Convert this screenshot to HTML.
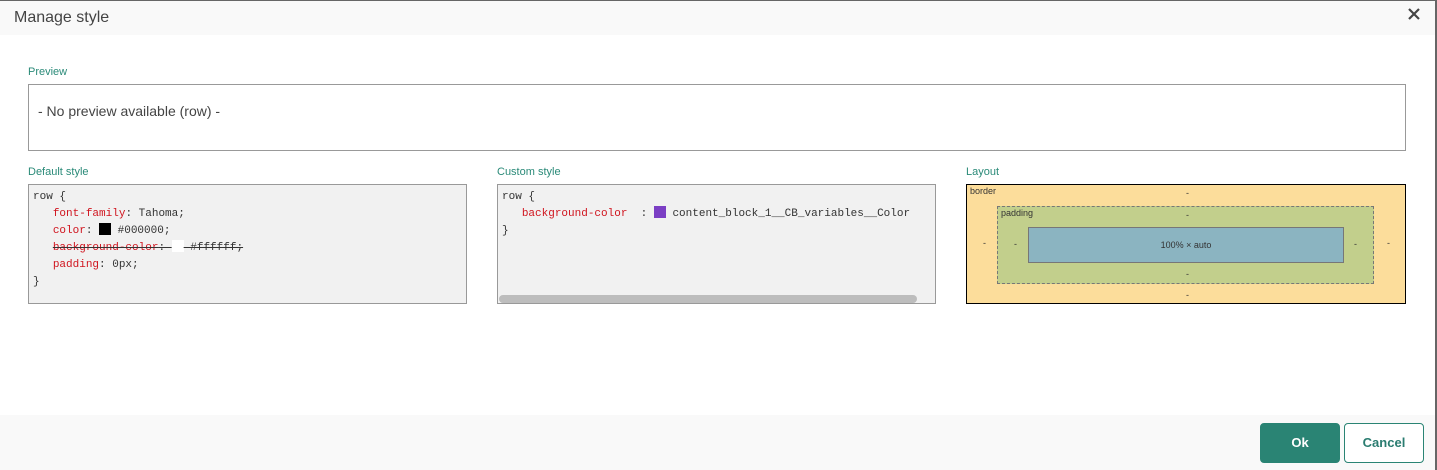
<!DOCTYPE html><html><head><style>
*{box-sizing:border-box;margin:0;padding:0}
body{width:1437px;height:470px;background:#fff;font-family:"Liberation Sans",sans-serif;position:relative;overflow:hidden;}
.tl{position:absolute;left:0;top:0;width:1437px;height:1px;background:#666}
.hdr{position:absolute;left:0;top:1px;width:1435px;height:34px;background:#f9f9f9;}
.hdr span{position:absolute;left:14px;top:8px;font-size:16px;color:#444}
.x{position:absolute;left:1406px;top:5px;}
.rb{position:absolute;left:1435px;top:0;width:2px;height:470px;background:#666}
.lbl{position:absolute;font-size:11px;color:#2a8a78}
.box{position:absolute;border:1px solid #999;background:#f1f1f1;font-family:"Liberation Mono",monospace;font-size:11px;color:#333;padding:4px 4px;line-height:17px}
.r{color:#d0141e}
.sw{display:inline-block;width:12px;height:12px;vertical-align:-2px}
.ftr{position:absolute;left:0;top:415px;width:1435px;height:55px;background:#f9f9f9}
.btn{position:absolute;top:423px;height:40px;border-radius:4px;font-size:13px;font-weight:bold;text-align:center;line-height:38px}
</style></head><body>
<div class="tl"></div>
<div class="hdr"><span>Manage style</span>
<svg class="x" width="16" height="16" viewBox="0 0 16 16"><path d="M3 3L13 13M13 3L3 13" stroke="#444" stroke-width="2.2"/></svg></div>
<div class="rb"></div>
<div class="lbl" style="left:28px;top:66px">Preview</div>
<div style="position:absolute;left:28px;top:84px;width:1378px;height:67px;border:1px solid #999;font-size:14px;color:#444;padding:18px 0 0 9px">- No preview available (row) -</div>
<div class="lbl" style="left:28px;top:166px">Default style</div>
<div class="box" style="left:28px;top:184px;width:439px;height:120px">row {<br>
&nbsp;&nbsp;&nbsp;<span class="r">font-family</span>: Tahoma;<br>
&nbsp;&nbsp;&nbsp;<span class="r">color</span>: <span class="sw" style="background:#000"></span> #000000;<br>
&nbsp;&nbsp;&nbsp;<span style="text-decoration:line-through"><span class="r">background-color</span>: <span class="sw" style="background:#fff"></span> #ffffff;</span><br>
&nbsp;&nbsp;&nbsp;<span class="r">padding</span>: 0px;<br>}</div>
<div class="lbl" style="left:497px;top:166px">Custom style</div>
<div class="box" style="left:497px;top:184px;width:439px;height:120px">row {<br>
&nbsp;&nbsp;&nbsp;<span class="r">background-color</span>&nbsp; : <span class="sw" style="background:#7b3fc4"></span> content_block_1__CB_variables__Color<br>}
<div style="position:absolute;left:1px;top:110px;width:418px;height:8px;border-radius:4px;background:#bdbdbd"></div></div>
<div class="lbl" style="left:966px;top:166px">Layout</div>
<div style="position:absolute;left:966px;top:184px;width:440px;height:120px;border:1px solid #000;background:#fcdd9b;font-size:9px;color:#333">
<div style="position:absolute;left:3px;top:1px">border</div>
<div style="position:absolute;left:219px;top:3px">-</div>
<div style="position:absolute;left:16px;top:53px">-</div>
<div style="position:absolute;left:420px;top:53px">-</div>
<div style="position:absolute;left:219px;top:105px">-</div>
<div style="position:absolute;left:30px;top:21px;width:377px;height:78px;border:1px dashed #777;background:#c2cf8c">
<div style="position:absolute;left:3px;top:1px">padding</div>
<div style="position:absolute;left:188px;top:3px">-</div>
<div style="position:absolute;left:16px;top:32px">-</div>
<div style="position:absolute;left:356px;top:32px">-</div>
<div style="position:absolute;left:188px;top:62px">-</div>
<div style="position:absolute;left:30px;top:20px;width:316px;height:36px;border:1px solid #777;background:#8bb4c1;text-align:center;line-height:34px">100% × auto</div>
</div></div>
<div class="ftr"></div>
<div class="btn" style="left:1260px;width:80px;background:#2a8474;color:#fff;border:1px solid #2a8474">Ok</div>
<div class="btn" style="left:1344px;width:80px;background:#fff;color:#2a7c70;border:1px solid #2a8474">Cancel</div>
</body></html>
